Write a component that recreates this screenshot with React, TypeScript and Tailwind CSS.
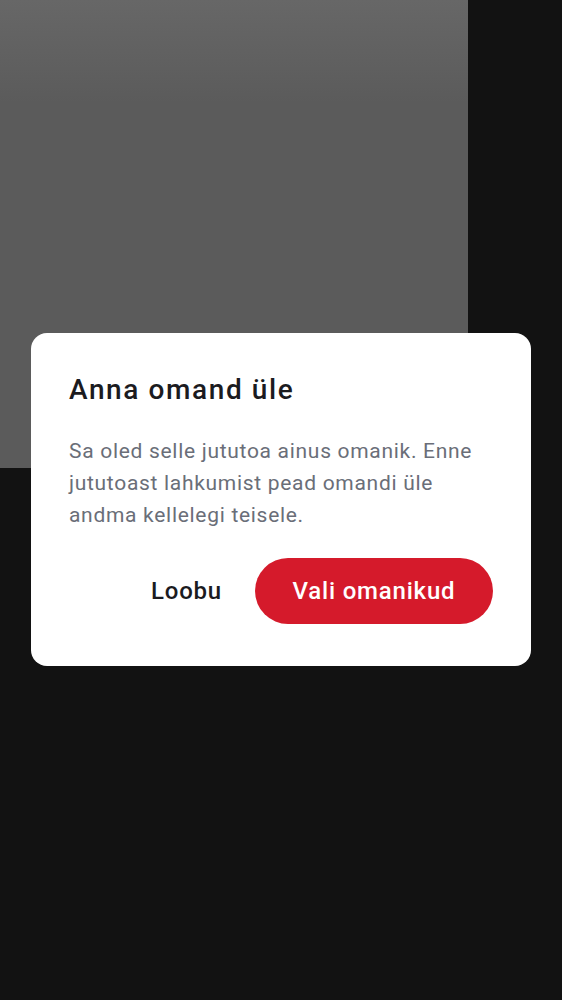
import React from 'react'

const font = { fontFamily: 'Roboto, "Noto Sans", sans-serif' }

const TransferOwnerDialog: React.FC = () => {
  return (
    <div className="absolute left-[31px] top-[333px] w-[500px] rounded-2xl bg-white px-[38px] pt-[39px] pb-[42px]">
      <h2 className="text-[28px] leading-9 font-medium tracking-[1.6px] text-[#1b1b1f]">Anna omand üle</h2>
      <p className="mt-[27px] text-[21px] leading-8 tracking-[0.7px] text-[#6a6e78]">
        Sa oled selle jututoa ainus omanik. Enne jututoast lahkumist pead omandi üle andma kellelegi teisele.
      </p>
      <div className="mt-[27px] flex items-center justify-end gap-[33px]">
        <button className="text-[24px] font-medium tracking-[0.8px] text-[#1b1b1f]">Loobu</button>
        <button className="h-[66px] w-[238px] rounded-full bg-[#d51a2b] text-[24px] font-medium tracking-[0.8px] text-white">
          Vali omanikud
        </button>
      </div>
    </div>
  )
}

const App: React.FC = () => {
  return (
    <div className="relative min-h-[1000px] w-full bg-[#121212]" style={font}>
      <div className="h-[468px] w-[468px] bg-[linear-gradient(to_bottom,#676767_0%,#5b5b5b_22%,#5b5b5b_100%)]"></div>
      <TransferOwnerDialog />
    </div>
  )
}

export default App
